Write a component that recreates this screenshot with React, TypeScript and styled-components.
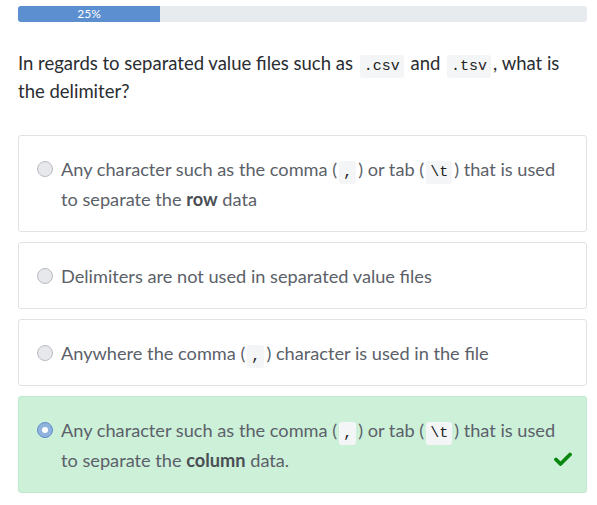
import React from "react";
import styled, { createGlobalStyle } from "styled-components";

const Global = createGlobalStyle`
  html, body { margin: 0; padding: 0; background: #fff; }
  body { font-family: Lato, "Noto Sans", sans-serif; }
`;

const Page = styled.div`
  padding: 6px 10px 0 18px;
  width: 569px;
`;

const Track = styled.div`
  height: 16px;
  background: #e8ebee;
  border-radius: 3px;
  overflow: hidden;
  display: flex;
`;

const Fill = styled.div`
  background: #5b8fd0;
  color: #fff;
  font-size: 12px;
  line-height: 16px;
  text-align: center;
`;

const Question = styled.p`
  margin: 27px 0 30px;
  font-size: 18.5px;
  line-height: 28px;
  color: #2a2d31;
`;

const Code = styled.code`
  font-family: "Liberation Mono", monospace;
  font-size: 15px;
  line-height: 1;
  background: #f4f5f6;
  color: #222;
  padding: 3px 4px;
  border-radius: 3px;
  margin: 0 2px;
`;

const Options = styled.div`
  display: flex;
  flex-direction: column;
  gap: 10px;
`;

const Card = styled.div<{ $correct?: boolean }>`
  position: relative;
  display: flex;
  align-items: flex-start;
  gap: 8px;
  padding: 17.5px 16px 17.5px 18px;
  border: 1px solid ${(p) => (p.$correct ? "#bfe9cd" : "#e0e2e5")};
  background: ${(p) => (p.$correct ? "#cdf0d9" : "#fff")};
  border-radius: 3px;
  font-size: 18.2px;
  line-height: 30px;
  color: #5b6169;
`;

const Radio = styled.span<{ $checked?: boolean }>`
  flex: none;
  box-sizing: border-box;
  width: 16px;
  height: 16px;
  margin-top: 7px;
  border-radius: 50%;
  border: 1px solid ${(p) => (p.$checked ? "#5e8fcb" : "#b8bcc2")};
  background: ${(p) => (p.$checked ? "#8fb3dd" : "#e6e8eb")};
  display: flex;
  align-items: center;
  justify-content: center;
  &::after {
    content: "";
    display: ${(p) => (p.$checked ? "block" : "none")};
    width: 6px;
    height: 6px;
    border-radius: 50%;
    background: #fff;
  }
`;

const Text = styled.div`
  flex: 1;
  b { color: #4a4f55; font-weight: 700; }
`;

const Check = styled.svg`
  position: absolute;
  right: 14px;
  bottom: 26px;
`;

export default function App() {
  return (
    <>
      <Global />
      <Page>
        <Track>
          <Fill style={{ width: "25%" }}>25%</Fill>
        </Track>
        <Question>
          In regards to separated value files such as <Code>.csv</Code> and <Code>.tsv</Code>, what is the
          delimiter?
        </Question>
        <Options>
          <Card>
            <Radio />
            <Text>
              Any character such as the comma (<Code>,</Code>) or tab (<Code>\t</Code>) that is used to
              separate the <b>row</b> data
            </Text>
          </Card>
          <Card>
            <Radio />
            <Text>Delimiters are not used in separated value files</Text>
          </Card>
          <Card>
            <Radio />
            <Text>
              Anywhere the comma (<Code>,</Code>) character is used in the file
            </Text>
          </Card>
          <Card $correct>
            <Radio $checked />
            <Text>
              Any character such as the comma (<Code>,</Code>) or tab (<Code>\t</Code>) that is used to
              separate the <b>column</b> data.
            </Text>
            <Check width="18" height="14" viewBox="0 0 18 14">
              <path d="M2 7.5 L6.5 12 L16 2.5" fill="none" stroke="#0a870f" strokeWidth="3.8" strokeLinecap="round" strokeLinejoin="round" />
            </Check>
          </Card>
        </Options>
      </Page>
    </>
  );
}
